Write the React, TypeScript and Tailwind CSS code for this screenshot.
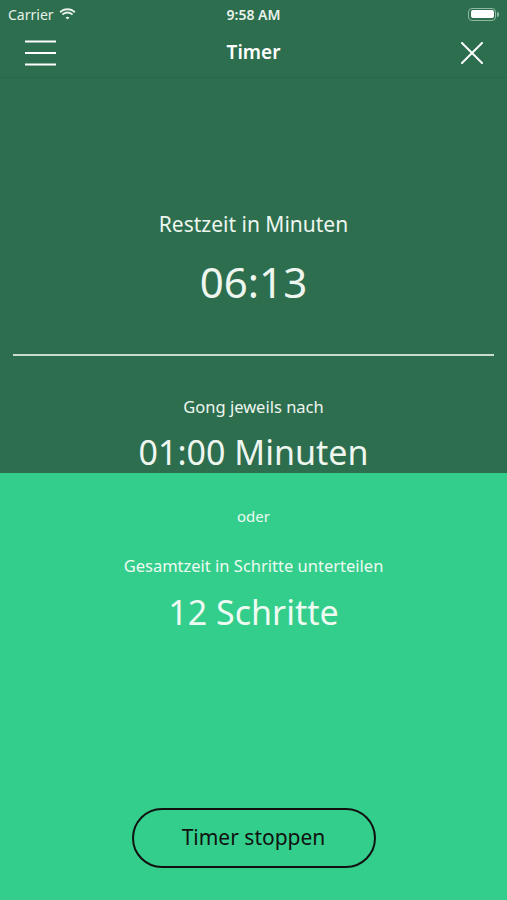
function StatusBar() {
  return (
    <div className="relative flex h-[28px] items-center justify-between px-[8px] text-[14px] text-[#e8f2ea]">
      <div className="flex items-center gap-[5px]">
        <span>Carrier</span>
        <svg width="17" height="12" viewBox="0 0 17 12" fill="#e8f2ea">
          <path d="M8.5 2.2c2.6 0 5 1 6.7 2.7l1.3-1.3C14.4 1.5 11.6.3 8.5.3S2.6 1.5.5 3.6l1.3 1.3C3.5 3.2 5.9 2.2 8.5 2.2z" />
          <path d="M8.5 5.5c1.7 0 3.3.7 4.4 1.8l1.3-1.3C12.7 4.5 10.7 3.6 8.5 3.6S4.3 4.5 2.8 6l1.3 1.3c1.1-1.1 2.7-1.8 4.4-1.8z" />
          <path d="M8.5 8.8c.8 0 1.5.3 2 .8l-2 2-2-2c.5-.5 1.2-.8 2-.8z" />
        </svg>
      </div>
      <span className="absolute left-1/2 -translate-x-1/2 font-semibold">9:58 AM</span>
      <div className="flex items-center">
        <div className="flex h-[13px] w-[28px] items-center rounded-[4px] border border-[#8fb9a0] p-[1.5px]">
          <div className="h-full w-full rounded-[2px] bg-white" />
        </div>
        <div className="ml-[1px] h-[5px] w-[2px] rounded-r-sm bg-[#8fb9a0]" />
      </div>
    </div>
  );
}

export default function App() {
  return (
    <div
      className="flex h-[900px] w-[507px] flex-col overflow-hidden bg-[#33ce8b]"
      style={{ fontFamily: '"Noto Sans", "Open Sans", sans-serif' }}
    >
      <div className="bg-[#2c6e4e]">
        <StatusBar />
        <div className="relative flex h-[50px] items-center justify-between border-b border-[#28664a] pl-[25px] pr-[24px]">
          <svg width="31" height="26" viewBox="0 0 31 26" stroke="white" strokeWidth="2">
            <line x1="0" y1="1.5" x2="31" y2="1.5" />
            <line x1="0" y1="13" x2="31" y2="13" />
            <line x1="0" y1="24.5" x2="31" y2="24.5" />
          </svg>
          <span className="absolute left-1/2 -translate-x-1/2 text-[19px] font-semibold text-white">Timer</span>
          <svg width="22" height="22" viewBox="0 0 22 22" stroke="white" strokeWidth="2" strokeLinecap="round">
            <line x1="1" y1="1" x2="21" y2="21" />
            <line x1="21" y1="1" x2="1" y2="21" />
          </svg>
        </div>
      </div>

      <div className="flex h-[395px] flex-col items-center bg-[#2c6e4e] text-[#eef6ef]">
        <p className="mt-[134px] text-[21px] leading-[24px]">Restzeit in Minuten</p>
        <p className="mt-[22px] text-[42px] leading-[48px]">06:13</p>
        <div className="mt-[48px] h-[2px] w-[481px] bg-[#c9dccf]" />
        <p className="mt-[41px] text-[16.5px] leading-[20px]">Gong jeweils nach</p>
        <p className="mt-[15px] text-[34px] leading-[40px]">01:00 Minuten</p>
      </div>

      <div className="flex flex-1 flex-col items-center text-[#eefaf2]">
        <p className="mt-[33px] text-[15px] leading-[20px]">oder</p>
        <p className="mt-[30px] text-[16.5px] leading-[20px]">Gesamtzeit in Schritte unterteilen</p>
        <p className="mt-[16px] text-[34px] leading-[40px]">12 Schritte</p>
        <button
          type="button"
          className="mt-[176px] flex h-[60px] w-[244px] items-center justify-center rounded-full border-[2.5px] border-[#111] text-[21px] text-[#111]"
        >
          Timer stoppen
        </button>
      </div>
    </div>
  );
}
